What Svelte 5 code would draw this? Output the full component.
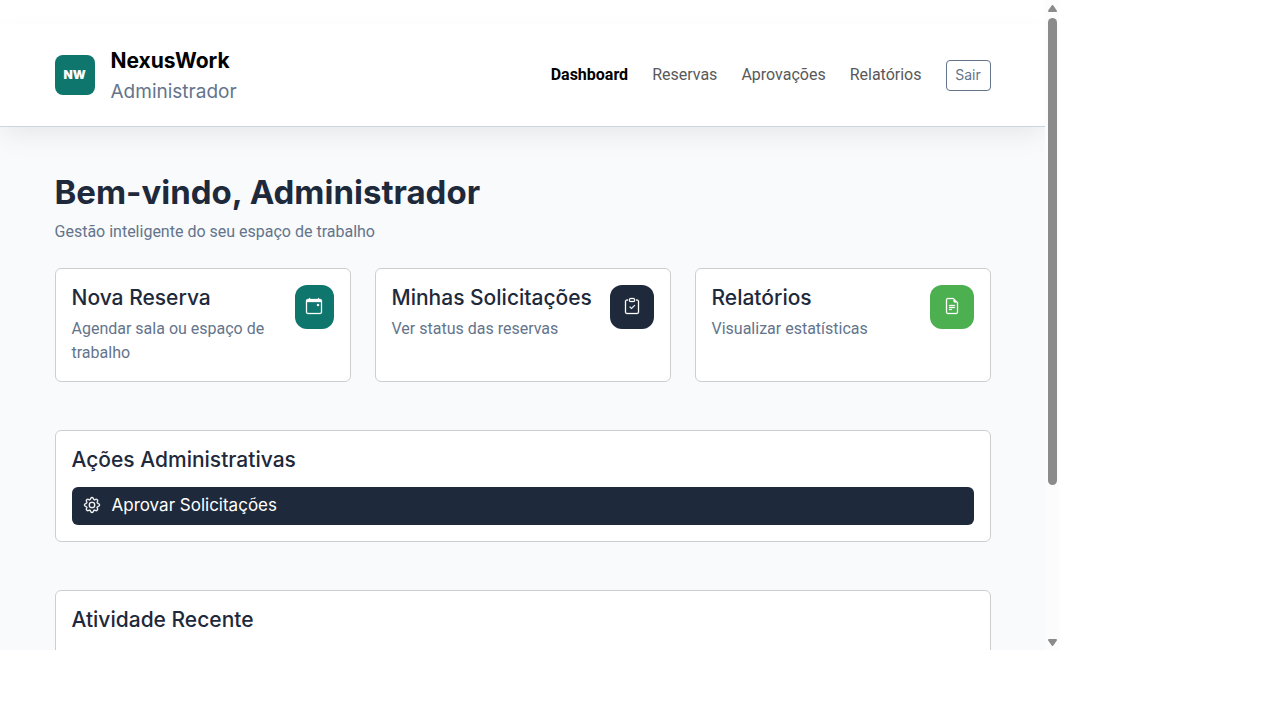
<script lang="ts">
	type Shortcut = {
		title: string;
		text: string;
		tone: string;
		icon: string[];
	};

	const links = ['Dashboard', 'Reservas', 'Aprovações', 'Relatórios'];
	let current = $state('Dashboard');

	const shortcuts: Shortcut[] = [
		{
			title: 'Nova Reserva',
			text: 'Agendar sala ou espaço de trabalho',
			tone: 'teal',
			icon: [
				'M11 6.5a.5.5 0 0 1 .5-.5h1a.5.5 0 0 1 .5.5v1a.5.5 0 0 1-.5.5h-1a.5.5 0 0 1-.5-.5z',
				'M3.5 0a.5.5 0 0 1 .5.5V1h8V.5a.5.5 0 0 1 1 0V1h1a2 2 0 0 1 2 2v11a2 2 0 0 1-2 2H2a2 2 0 0 1-2-2V3a2 2 0 0 1 2-2h1V.5a.5.5 0 0 1 .5-.5M1 4v10a1 1 0 0 0 1 1h12a1 1 0 0 0 1-1V4z'
			]
		},
		{
			title: 'Minhas Solicitações',
			text: 'Ver status das reservas',
			tone: 'navy',
			icon: [
				'M10.854 7.146a.5.5 0 0 1 0 .708l-3 3a.5.5 0 0 1-.708 0l-1.5-1.5a.5.5 0 1 1 .708-.708L7.5 9.793l2.646-2.647a.5.5 0 0 1 .708 0',
				'M4 1.5H3a2 2 0 0 0-2 2V14a2 2 0 0 0 2 2h10a2 2 0 0 0 2-2V3.5a2 2 0 0 0-2-2h-1v1h1a1 1 0 0 1 1 1V14a1 1 0 0 1-1 1H3a1 1 0 0 1-1-1V3.5a1 1 0 0 1 1-1h1z',
				'M9.5 1a.5.5 0 0 1 .5.5v1a.5.5 0 0 1-.5.5h-3a.5.5 0 0 1-.5-.5v-1a.5.5 0 0 1 .5-.5zm-3-1A1.5 1.5 0 0 0 5 1.5v1A1.5 1.5 0 0 0 6.5 4h3A1.5 1.5 0 0 0 11 2.5v-1A1.5 1.5 0 0 0 9.5 0z'
			]
		},
		{
			title: 'Relatórios',
			text: 'Visualizar estatísticas',
			tone: 'green',
			icon: [
				'M5.5 7a.5.5 0 0 0 0 1h5a.5.5 0 0 0 0-1zM5 9.5a.5.5 0 0 1 .5-.5h5a.5.5 0 0 1 0 1h-5a.5.5 0 0 1-.5-.5m0 2a.5.5 0 0 1 .5-.5h2a.5.5 0 0 1 0 1h-2a.5.5 0 0 1-.5-.5',
				'M9.5 0H4a2 2 0 0 0-2 2v12a2 2 0 0 0 2 2h8a2 2 0 0 0 2-2V4.5zm0 1v2A1.5 1.5 0 0 0 11 4.5h2V14a1 1 0 0 1-1 1H4a1 1 0 0 1-1-1V2a1 1 0 0 1 1-1z'
			]
		}
	];

	const gear = [
		'M8 4.754a3.246 3.246 0 1 0 0 6.492 3.246 3.246 0 0 0 0-6.492M5.754 8a2.246 2.246 0 1 1 4.492 0 2.246 2.246 0 0 1-4.492 0',
		'M9.796 1.343c-.527-1.79-3.065-1.79-3.592 0l-.094.319a.873.873 0 0 1-1.255.52l-.292-.16c-1.64-.892-3.433.902-2.54 2.541l.159.292a.873.873 0 0 1-.52 1.255l-.319.094c-1.79.527-1.79 3.065 0 3.592l.319.094a.873.873 0 0 1 .52 1.255l-.16.292c-.892 1.64.901 3.434 2.541 2.54l.292-.159a.873.873 0 0 1 1.255.52l.094.319c.527 1.79 3.065 1.79 3.592 0l.094-.319a.873.873 0 0 1 1.255-.52l.292.16c1.64.893 3.434-.902 2.54-2.541l-.159-.292a.873.873 0 0 1 .52-1.255l.319-.094c1.79-.527 1.79-3.065 0-3.592l-.319-.094a.873.873 0 0 1-.52-1.255l.16-.292c.893-1.64-.902-3.433-2.541-2.54l-.292.159a.873.873 0 0 1-1.255-.52zm-2.633.283c.246-.835 1.428-.835 1.674 0l.094.319a1.873 1.873 0 0 0 2.693 1.115l.291-.16c.764-.415 1.6.42 1.184 1.185l-.159.292a1.873 1.873 0 0 0 1.116 2.692l.318.094c.835.246.835 1.428 0 1.674l-.319.094a1.873 1.873 0 0 0-1.115 2.693l.16.291c.415.764-.42 1.6-1.185 1.184l-.291-.159a1.873 1.873 0 0 0-2.693 1.116l-.094.318c-.246.835-1.428.835-1.674 0l-.094-.319a1.873 1.873 0 0 0-2.692-1.115l-.292.16c-.764.415-1.6-.42-1.184-1.185l.159-.291A1.873 1.873 0 0 0 1.945 8.93l-.319-.094c-.835-.246-.835-1.428 0-1.674l.319-.094A1.873 1.873 0 0 0 3.06 4.377l-.16-.292c-.415-.764.42-1.6 1.185-1.184l.292.159a1.873 1.873 0 0 0 2.692-1.115z'
	];
</script>

{#snippet icon(paths: string[])}
	<svg class="icon" viewBox="0 0 16 16" aria-hidden="true">
		{#each paths as d}
			<path {d} />
		{/each}
	</svg>
{/snippet}

<div class="frame">
	<div class="view">
		<header>
			<div class="container bar">
				<div class="brand">
					<div class="logo">NW</div>
					<div class="brand-text">
						<div class="brand-name">NexusWork</div>
						<div class="brand-role">Administrador</div>
					</div>
				</div>
				<nav>
					{#each links as link}
						<a href="#{link}" class:active={current === link} onclick={() => (current = link)}>
							{link}
						</a>
					{/each}
					<button class="logout">Sair</button>
				</nav>
			</div>
		</header>

		<main>
			<div class="container">
				<h1>Bem-vindo, Administrador</h1>
				<p class="lead">Gestão inteligente do seu espaço de trabalho</p>

				<div class="shortcuts">
					{#each shortcuts as item}
						<div class="card shortcut">
							<div>
								<h2>{item.title}</h2>
								<p>{item.text}</p>
							</div>
							<div class="badge {item.tone}">{@render icon(item.icon)}</div>
						</div>
					{/each}
				</div>

				<section class="card">
					<h2>Ações Administrativas</h2>
					<button class="approve">
						{@render icon(gear)}
						Aprovar Solicitações
					</button>
				</section>

				<section class="card recent">
					<h2>Atividade Recente</h2>
				</section>
			</div>
		</main>
	</div>

	<div class="scrollbar" aria-hidden="true">
		<svg viewBox="0 0 9 7"><path d="M4.5 1 8 6H1z" /></svg>
		<div class="track"><div class="thumb"></div></div>
		<svg viewBox="0 0 9 7"><path d="M4.5 6 8 1H1z" /></svg>
	</div>
</div>

<style>
	:global(body) {
		background: #ffffff;
		overflow: hidden;
	}

	.frame {
		display: flex;
		height: calc(100vh - 70px);
		margin-right: 221px;
		overflow: hidden;
		font-family: Roboto, sans-serif;
		font-size: 16px;
		line-height: 24px;
		color: #1e293b;
	}

	.frame * {
		box-sizing: border-box;
	}

	.view {
		display: flex;
		flex: 1;
		flex-direction: column;
		min-width: 0;
		padding-top: 24px;
		overflow: hidden;
	}

	.container {
		max-width: 960px;
		margin: 0 auto;
		padding: 0 12px;
	}

	header {
		position: relative;
		flex: none;
		padding: 19px 0;
		background: #ffffff;
		border-bottom: 1px solid #cbd5e1;
		box-shadow: 0 10px 25px -3px rgba(0, 0, 0, 0.08);
	}

	.bar {
		display: flex;
		align-items: center;
		justify-content: space-between;
	}

	.brand {
		display: flex;
		align-items: center;
		gap: 16px;
	}

	.brand-text {
		padding-top: 2px;
	}

	.logo {
		display: grid;
		place-items: center;
		width: 40px;
		height: 40px;
		border-radius: 8px;
		background: #0f766e;
		color: #ffffff;
		font-family: Inter, sans-serif;
		font-size: 12px;
		font-weight: 900;
	}

	.brand-name,
	.brand-role,
	h1,
	h2,
	button {
		font-family: Inter, sans-serif;
	}

	.brand-name {
		color: #000000;
		font-size: 21px;
		font-weight: 700;
		line-height: 31px;
	}

	.brand-role {
		color: #64748b;
		font-size: 19px;
		line-height: 31px;
	}

	nav {
		display: flex;
		align-items: center;
		gap: 24px;
	}

	nav a {
		color: #595959;
		text-decoration: none;
	}

	nav a.active {
		color: #000000;
		font-weight: 700;
	}

	.logout {
		min-width: 45px;
		padding: 3px 8px 5px;
		border: 1px solid #64748b;
		border-radius: 4px;
		background: transparent;
		color: #64748b;
		font-size: 14px;
		line-height: 21px;
		cursor: pointer;
	}

	main {
		flex: 1;
		padding-top: 46px;
		background: #f8fafc;
	}

	h1 {
		margin: 0 0 8px;
		font-size: 33px;
		font-weight: 700;
		line-height: 39px;
	}

	h2 {
		margin: 0 0 6px;
		font-size: 21px;
		font-weight: 500;
		line-height: 26px;
	}

	p {
		margin: 0;
		color: #64748b;
	}

	.lead {
		margin-bottom: 24px;
	}

	.card {
		margin-bottom: 48px;
		padding: 16px;
		border: 1px solid #cdced0;
		border-radius: 6px;
		background: #ffffff;
	}

	.shortcuts {
		display: grid;
		grid-template-columns: repeat(3, 1fr);
		gap: 24px;
		margin-bottom: 48px;
	}

	.shortcut {
		display: flex;
		align-items: flex-start;
		justify-content: space-between;
		margin-bottom: 0;
	}

	.badge {
		display: flex;
		align-items: center;
		justify-content: center;
		width: 44px;
		height: 44px;
		padding-bottom: 2px;
		border-radius: 12px;
		color: #ffffff;
	}

	.teal {
		background: #0f766e;
	}

	.navy {
		background: #1e293b;
	}

	.green {
		background: #4caf50;
	}

	.icon {
		flex: none;
		width: 16px;
		height: 16px;
		overflow: visible;
		fill: currentColor;
		stroke: currentColor;
		stroke-width: 0.3;
	}

	.approve {
		display: flex;
		align-items: center;
		gap: 12px;
		width: 100%;
		margin-top: 14px;
		padding: 6px 12px 8px;
		border: none;
		border-radius: 6px;
		background: #1e293b;
		color: #ffffff;
		font-size: 17px;
		line-height: 24px;
		text-align: left;
		cursor: pointer;
	}

	.recent {
		min-height: 200px;
	}

	.scrollbar {
		display: flex;
		flex: none;
		flex-direction: column;
		align-items: center;
		gap: 6px;
		width: 14px;
		padding: 5px 0 4px;
		background: #fcfcfc;
	}

	.scrollbar svg {
		width: 9px;
		height: 7px;
		fill: #8b8b8b;
		stroke: #8b8b8b;
		stroke-width: 2;
		stroke-linejoin: round;
	}

	.track {
		flex: 1;
		width: 9px;
	}

	.thumb {
		height: 76%;
		border-radius: 5px;
		background: #8b8b8b;
	}
</style>
